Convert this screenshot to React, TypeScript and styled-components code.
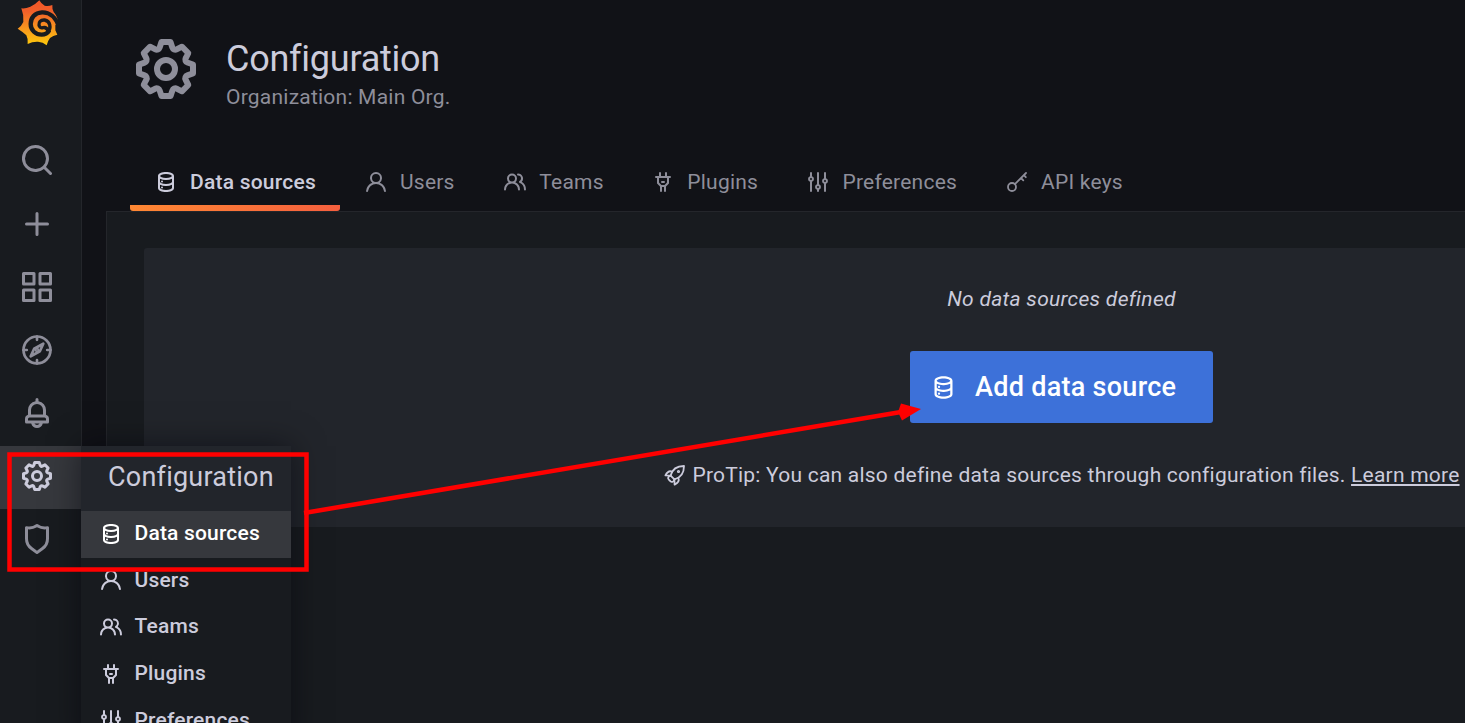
import React from "react";
import styled, { createGlobalStyle, css } from "styled-components";

const GlobalStyle = createGlobalStyle`
  *, *::before, *::after { box-sizing: border-box; }
  body {
    margin: 0;
    overflow: hidden;
    background: #111217;
    color: #ccccdc;
    font-family: Roboto, "Liberation Sans", sans-serif;
    font-size: 21px;
    line-height: 33px;
    letter-spacing: 0.01071em;
  }
`;

const paths = {
  search:
    "M21.71,20.29,18,16.61A9,9,0,1,0,16.61,18l3.68,3.68a1,1,0,0,0,1.42,0A1,1,0,0,0,21.71,20.29ZM11,18a7,7,0,1,1,7-7A7,7,0,0,1,11,18Z",
  plus: "M19,11H13V5a1,1,0,0,0-2,0v6H5a1,1,0,0,0,0,2h6v6a1,1,0,0,0,2,0V13h6a1,1,0,0,0,0-2Z",
  apps: "M10,13H3a1,1,0,0,0-1,1v7a1,1,0,0,0,1,1h7a1,1,0,0,0,1-1V14A1,1,0,0,0,10,13ZM9,20H4V15H9ZM21,2H14a1,1,0,0,0-1,1v7a1,1,0,0,0,1,1h7a1,1,0,0,0,1-1V3A1,1,0,0,0,21,2ZM20,9H15V4h5Zm1,4H14a1,1,0,0,0-1,1v7a1,1,0,0,0,1,1h7a1,1,0,0,0,1-1V14A1,1,0,0,0,21,13Zm-1,7H15V15h5ZM10,2H3A1,1,0,0,0,2,3v7a1,1,0,0,0,1,1h7a1,1,0,0,0,1-1V3A1,1,0,0,0,10,2ZM9,9H4V4H9Z",
  bell: "M18,13.18V10a6,6,0,0,0-5-5.91V3a1,1,0,0,0-2,0V4.09A6,6,0,0,0,6,10v3.18A3,3,0,0,0,4,16v2a1,1,0,0,0,1,1H8.14a4,4,0,0,0,7.72,0H19a1,1,0,0,0,1-1V16A3,3,0,0,0,18,13.18ZM8,10a4,4,0,0,1,8,0v3H8Zm4,10a2,2,0,0,1-1.72-1h3.44A2,2,0,0,1,12,20Zm6-3H6V16a1,1,0,0,1,1-1H17a1,1,0,0,1,1,1Z",
  cog: "M21.32,9.55l-1.89-.63.89-1.78A1,1,0,0,0,20.13,6L18,3.87a1,1,0,0,0-1.15-.19l-1.78.89-.63-1.89A1,1,0,0,0,13.5,2h-3a1,1,0,0,0-.95.68L8.92,4.57,7.14,3.68A1,1,0,0,0,6,3.87L3.87,6a1,1,0,0,0-.19,1.15l.89,1.78-1.89.63A1,1,0,0,0,2,10.5v3a1,1,0,0,0,.68.95l1.89.63-.89,1.78A1,1,0,0,0,3.87,18L6,20.13a1,1,0,0,0,1.15.19l1.78-.89.63,1.89a1,1,0,0,0,.95.68h3a1,1,0,0,0,.95-.68l.63-1.89,1.78.89A1,1,0,0,0,18,20.13L20.13,18a1,1,0,0,0,.19-1.15l-.89-1.78,1.89-.63A1,1,0,0,0,22,13.5v-3A1,1,0,0,0,21.32,9.55ZM20,12.78l-1.2.4A2,2,0,0,0,17.64,16l.57,1.14-1.1,1.1L16,17.64a2,2,0,0,0-2.79,1.16l-.4,1.2H11.22l-.4-1.2A2,2,0,0,0,8,17.64l-1.14.57-1.1-1.1L6.36,16A2,2,0,0,0,5.2,13.18L4,12.78V11.22l1.2-.4A2,2,0,0,0,6.36,8L5.79,6.89l1.1-1.1L8,6.36A2,2,0,0,0,10.82,5.2l.4-1.2h1.56l.4,1.2A2,2,0,0,0,16,6.36l1.14-.57,1.1,1.1L17.64,8a2,2,0,0,0,1.16,2.79l1.2.4ZM12,8a4,4,0,1,0,4,4A4,4,0,0,0,12,8Zm0,6a2,2,0,1,1,2-2A2,2,0,0,1,12,14Z",
  shield:
    "M19.63,3.65a1,1,0,0,0-.84-.2,8,8,0,0,1-6.22-1.27,1,1,0,0,0-1.14,0A8,8,0,0,1,5.21,3.45a1,1,0,0,0-.84.2A1,1,0,0,0,4,4.43v7.45a9,9,0,0,0,3.77,7.33l3.65,2.6a1,1,0,0,0,1.16,0l3.65-2.6A9,9,0,0,0,20,11.88V4.43A1,1,0,0,0,19.63,3.65ZM18,11.88a7,7,0,0,1-2.93,5.7L12,19.77,8.93,17.58A7,7,0,0,1,6,11.88V5.58a10,10,0,0,0,6-1.39,10,10,0,0,0,6,1.39Z",
  database:
    "M8,16.5a1,1,0,1,0,1,1A1,1,0,0,0,8,16.5ZM12,2C8,2,4,3.37,4,6V18c0,2.63,4,4,8,4s8-1.37,8-4V6C20,3.37,16,2,12,2Zm6,16c0,.71-2.28,2-6,2s-6-1.29-6-2V14.73A13.16,13.16,0,0,0,12,16a13.16,13.16,0,0,0,6-1.27Zm0-6c0,.71-2.28,2-6,2s-6-1.29-6-2V8.73A13.16,13.16,0,0,0,12,10a13.16,13.16,0,0,0,6-1.27ZM12,8C8.28,8,6,6.71,6,6s2.28-2,6-2,6,1.29,6,2S15.72,8,12,8ZM8,10.5a1,1,0,1,0,1,1A1,1,0,0,0,8,10.5Z",
  user: "M15.71,12.71a6,6,0,1,0-7.42,0,10,10,0,0,0-6.22,8.18,1,1,0,0,0,2,.22,8,8,0,0,1,15.9,0,1,1,0,0,0,1,.89h.11a1,1,0,0,0,.88-1.1A10,10,0,0,0,15.71,12.71ZM12,12a4,4,0,1,1,4-4A4,4,0,0,1,12,12Z",
  users:
    "M12.3,12.22A4.92,4.92,0,0,0,14,8.5a5,5,0,0,0-10,0,4.92,4.92,0,0,0,1.7,3.72A8,8,0,0,0,1,19.5a1,1,0,0,0,2,0,6,6,0,0,1,12,0,1,1,0,0,0,2,0A8,8,0,0,0,12.3,12.22ZM9,11.5a3,3,0,1,1,3-3A3,3,0,0,1,9,11.5Zm9.74.32A5,5,0,0,0,15,3.5a1,1,0,0,0,0,2,3,3,0,0,1,3,3,3,3,0,0,1-1.5,2.59,1,1,0,0,0-.5.84,1,1,0,0,0,.45.86l.39.26.13.07a7,7,0,0,1,4,6.38,1,1,0,0,0,2,0A9,9,0,0,0,18.74,11.82Z",
  plug: "M19,6H16V3a1,1,0,0,0-2,0V6H10V3A1,1,0,0,0,8,3V6H5A1,1,0,0,0,5,8H6v5a1,1,0,0,0,.29.71L9,16.41V21a1,1,0,0,0,2,0V17h2v4a1,1,0,0,0,2,0V16.41l2.71-2.7A1,1,0,0,0,18,13V8h1a1,1,0,0,0,0-2Zm-3,6.59L13.59,15H10.41L8,12.59V8h8ZM11,13h2a1,1,0,0,0,0-2H11a1,1,0,0,0,0,2Z",
  sliders:
    "M20,8.18V3a1,1,0,0,0-2,0V8.18a3,3,0,0,0,0,5.64V21a1,1,0,0,0,2,0V13.82a3,3,0,0,0,0-5.64ZM19,12a1,1,0,1,1,1-1A1,1,0,0,1,19,12Zm-6,2.18V3a1,1,0,0,0-2,0V14.18a3,3,0,0,0,0,5.64V21a1,1,0,0,0,2,0V19.82a3,3,0,0,0,0-5.64ZM12,18a1,1,0,1,1,1-1A1,1,0,0,1,12,18ZM6,6.18V3A1,1,0,0,0,4,3V6.18a3,3,0,0,0,0,5.64V21a1,1,0,0,0,2,0V11.82A3,3,0,0,0,6,6.18ZM5,10A1,1,0,1,1,6,9,1,1,0,0,1,5,10Z",
};

const strokes = {
  compass: (
    <>
      <circle cx="12" cy="12" r="9" />
      <path d="M12 3v2.2M12 18.8V21M3 12h2.2M18.8 12H21M16.2 7.8l-2.3 5-6.1 3.4 2.3-5z" />
      <circle cx="12" cy="12" r="0.6" />
    </>
  ),
  key: (
    <>
      <circle cx="7" cy="17" r="4" />
      <path d="M9.9 14.1L21 3M16 8l2.3 2.3M18.8 5.2l2 2" />
    </>
  ),
  rocket: (
    <>
      <path d="M7.600 12.600C9.200 6.400 14 3 21 3c0 7-3.400 11.800-9.600 13.400z" />
      <path d="M9.200 8.700C6.400 7.400 4 9.400 2.400 12.400l5.200.2M15.300 14.800c1.300 2.800-.7 5.200-3.700 6.800l-.2-5.200" />
      <path d="M7.600 12.600C5.200 13.200 4.200 15.200 6 16.800l1.200 1.200c1.600 1.800 3.600.8 4.200-1.600" />
      <circle cx="15.500" cy="8.500" r="0.700" />
    </>
  ),
};

type IconName = keyof typeof paths | keyof typeof strokes;

const Glyph = styled.svg<{ $size: number }>`
  display: block;
  flex: none;
  width: ${(p) => p.$size}px;
  height: ${(p) => p.$size}px;
`;

function Icon({ name, size = 24 }: { name: IconName; size?: number }) {
  if (name in strokes) {
    return (
      <Glyph
        $size={size}
        viewBox="0 0 24 24"
        fill="none"
        stroke="currentColor"
        strokeWidth="1.800"
        strokeLinecap="round"
        strokeLinejoin="round"
      >
        {strokes[name as keyof typeof strokes]}
      </Glyph>
    );
  }
  return (
    <Glyph $size={size} viewBox="0 0 24 24" fill="currentColor">
      <path d={paths[name as keyof typeof paths]} />
    </Glyph>
  );
}

function Logo() {
  return (
    <svg width="42" height="46" viewBox="50 0 126 138" fill="none">
      <defs>
        <linearGradient id="logo-gradient" x1="0" y1="1" x2="0" y2="0">
          <stop offset="0" stopColor="#fcca0b" />
          <stop offset="0.35" stopColor="#f99a1d" />
          <stop offset="0.75" stopColor="#f1602a" />
          <stop offset="1" stopColor="#f05528" />
        </linearGradient>
      </defs>
      <path
        fill="url(#logo-gradient)"
        d="M117 1Q122 11 133 17Q145 19 156 15Q155 26 160 36Q171 48 173 66L165 76L165 91L171 104Q158 106 149 114Q142 123 139 136Q128 126 113 125Q97 124 82 132Q84 117 78 106Q67 95 52 86Q64 78 69 66Q71 45 63 25Q75 27 90 20Q106 13 117 1Z"
      />
      <path
        stroke="#181b1f"
        strokeWidth="13"
        d="M176 80C166 50 146 36 125 37C103 38 91 54 91 72C91 91 106 104 124 104C134 104 142 99 147 91"
      />
      <path
        stroke="#181b1f"
        strokeWidth="10"
        strokeLinecap="round"
        d="M144 95C152 84 151 63 133 60C120 59 115 67 116 75C117 82 122 85 128 83C135 81 140 83 144 95"
      />
    </svg>
  );
}

const Screen = styled.div`
  position: relative;
  display: flex;
  width: 100vw;
  height: 100vh;
  overflow: hidden;
`;

const Sidebar = styled.nav`
  flex: none;
  display: flex;
  flex-direction: column;
  width: 82px;
  background: #181b1f;
  border-right: 1px solid #24262b;
`;

const LogoLink = styled.a`
  display: flex;
  height: 131px;
  padding-left: 17px;
`;

const NavItem = styled.a<{ $active?: boolean }>`
  display: flex;
  align-items: center;
  height: 63px;
  padding: 0 0 4px 19px;
  color: ${(p) => (p.$active ? "#ccccdc" : "#8e8e9a")};
  background: ${(p) => (p.$active ? "#36383d" : "transparent")};

  &:nth-child(2) {
    padding-bottom: 6px;
  }
`;

const Main = styled.main`
  flex: 1;
  min-width: 0;
  display: flex;
  flex-direction: column;
  padding-left: 24px;
`;

const PageHeader = styled.header`
  flex: none;
  display: flex;
  height: 154px;
  padding: 33px 0 0 24px;
  color: #8e8e9a;
`;

const Heading = styled.div`
  padding: 4px 0 0 24px;
`;

const Title = styled.h1`
  margin: 0;
  color: #ccccdc;
  font-size: 36px;
  font-weight: 400;
  line-height: 44px;
  letter-spacing: -0.25px;
`;

const Subtitle = styled.div`
  line-height: 33px;
`;

const Tabs = styled.div`
  flex: none;
  display: flex;
  height: 57px;
  padding-left: 24px;
`;

const Tab = styled.a<{ $width: number; $active?: boolean }>`
  display: flex;
  flex: none;
  align-items: center;
  gap: 12px;
  width: ${(p) => p.$width}px;
  padding-left: 24px;
  color: #8e8e9a;

  svg {
    margin-bottom: 1px;
  }

  ${(p) =>
    p.$active &&
    css`
      color: #ccccdc;
      font-weight: 500;
      border-radius: 3px;
      background: linear-gradient(90deg, #ff8833 0%, #f55f3e 100%) bottom / 100% 6px no-repeat;
    `}
`;

const Content = styled.section`
  flex: 1;
  padding: 36px 0 0 37px;
  overflow: hidden;
  background: #181b1f;
  border: solid #24262b;
  border-width: 1px 0 0 1px;
`;

const EmptyState = styled.div`
  display: flex;
  flex-direction: column;
  align-items: center;
  width: 1835px;
  height: 279px;
  padding-top: 35px;
  background: #22252b;
  border-radius: 3px;
`;

const EmptyText = styled.em`
  margin-bottom: 35px;
  letter-spacing: 0.29px;
`;

const AddButton = styled.button`
  display: flex;
  align-items: center;
  gap: 18px;
  width: 303px;
  height: 72px;
  padding: 0 0 0 20px;
  color: #fff;
  background: #3d71d9;
  border: 0;
  border-radius: 3px;
  font: 500 27px/36px Roboto, "Liberation Sans", sans-serif;
  letter-spacing: 0.28px;
`;

const ProTip = styled.div`
  display: flex;
  align-items: center;
  gap: 5px;
  margin-top: 36px;
  white-space: pre;

  svg {
    margin-bottom: 2px;
  }
`;

const LearnMore = styled.a`
  text-decoration: underline;
`;

const Menu = styled.div`
  position: absolute;
  left: 81px;
  top: 446px;
  width: 210px;
  height: 300px;
  background: #181b1f;
  box-shadow: 0 0 30px rgba(1, 4, 9, 0.5);
`;

const MenuTitle = styled.div`
  height: 65px;
  padding-left: 27px;
  background: #22252b;
  font-size: 27px;
  line-height: 62px;
  letter-spacing: 0.22px;
`;

const MenuItem = styled.a<{ $active?: boolean }>`
  display: flex;
  align-items: center;
  gap: 12px;
  height: 46.600px;
  padding: 0 0 1px 17.500px;
  font-weight: 500;
  letter-spacing: 0.18px;
  color: ${(p) => (p.$active ? "#ffffff" : "#ccccdc")};
  background: ${(p) => (p.$active ? "#36383d" : "transparent")};
`;

const Annotations = styled.svg`
  position: absolute;
  inset: 0;
  width: 1465px;
  height: 723px;
  pointer-events: none;
`;

const navItems: { icon: IconName; active?: boolean }[] = [
  { icon: "search" },
  { icon: "plus" },
  { icon: "apps" },
  { icon: "compass" },
  { icon: "bell" },
  { icon: "cog", active: true },
  { icon: "shield" },
];

const tabs: { icon: IconName; label: string; width: number }[] = [
  { icon: "database", label: "Data sources", width: 210 },
  { icon: "user", label: "Users", width: 139.3 },
  { icon: "users", label: "Teams", width: 148 },
  { icon: "plug", label: "Plugins", width: 155.2 },
  { icon: "sliders", label: "Preferences", width: 198.5 },
  { icon: "key", label: "API keys", width: 170 },
];

export default function App() {
  return (
    <Screen>
      <GlobalStyle />
      <Sidebar>
        <LogoLink>
          <Logo />
        </LogoLink>
        {navItems.map((item) => (
          <NavItem key={item.icon} $active={item.active}>
            <Icon name={item.icon} size={36} />
          </NavItem>
        ))}
      </Sidebar>
      <Main>
        <PageHeader>
          <Icon name="cog" size={72} />
          <Heading>
            <Title>Configuration</Title>
            <Subtitle>Organization: Main Org.</Subtitle>
          </Heading>
        </PageHeader>
        <Tabs>
          {tabs.map((tab, i) => (
            <Tab key={tab.label} $width={tab.width} $active={i === 0}>
              <Icon name={tab.icon} />
              {tab.label}
            </Tab>
          ))}
        </Tabs>
        <Content>
          <EmptyState>
            <EmptyText>No data sources defined</EmptyText>
            <AddButton>
              <Icon name="database" size={27} />
              Add data source
            </AddButton>
            <ProTip>
              <Icon name="rocket" />
              <span>
                ProTip: You can also define data sources through configuration files.{" "}
                <LearnMore>Learn more</LearnMore>
              </span>
            </ProTip>
          </EmptyState>
        </Content>
      </Main>
      <Menu>
        <MenuTitle>Configuration</MenuTitle>
        {tabs.slice(0, 5).map((tab, i) => (
          <MenuItem key={tab.label} $active={i === 0}>
            <Icon name={tab.icon} />
            {tab.label}
          </MenuItem>
        ))}
      </Menu>
      <Annotations viewBox="0 0 1465 723" fill="none" stroke="#ff0000">
        <rect x="9.500" y="454.500" width="297" height="115" strokeWidth="4.500" />
        <path d="M304 513L904 411.500" strokeWidth="4.500" />
        <path d="M921 409L901 403.500L898 412L902 420.500Z" fill="#ff0000" stroke="none" />
      </Annotations>
    </Screen>
  );
}
